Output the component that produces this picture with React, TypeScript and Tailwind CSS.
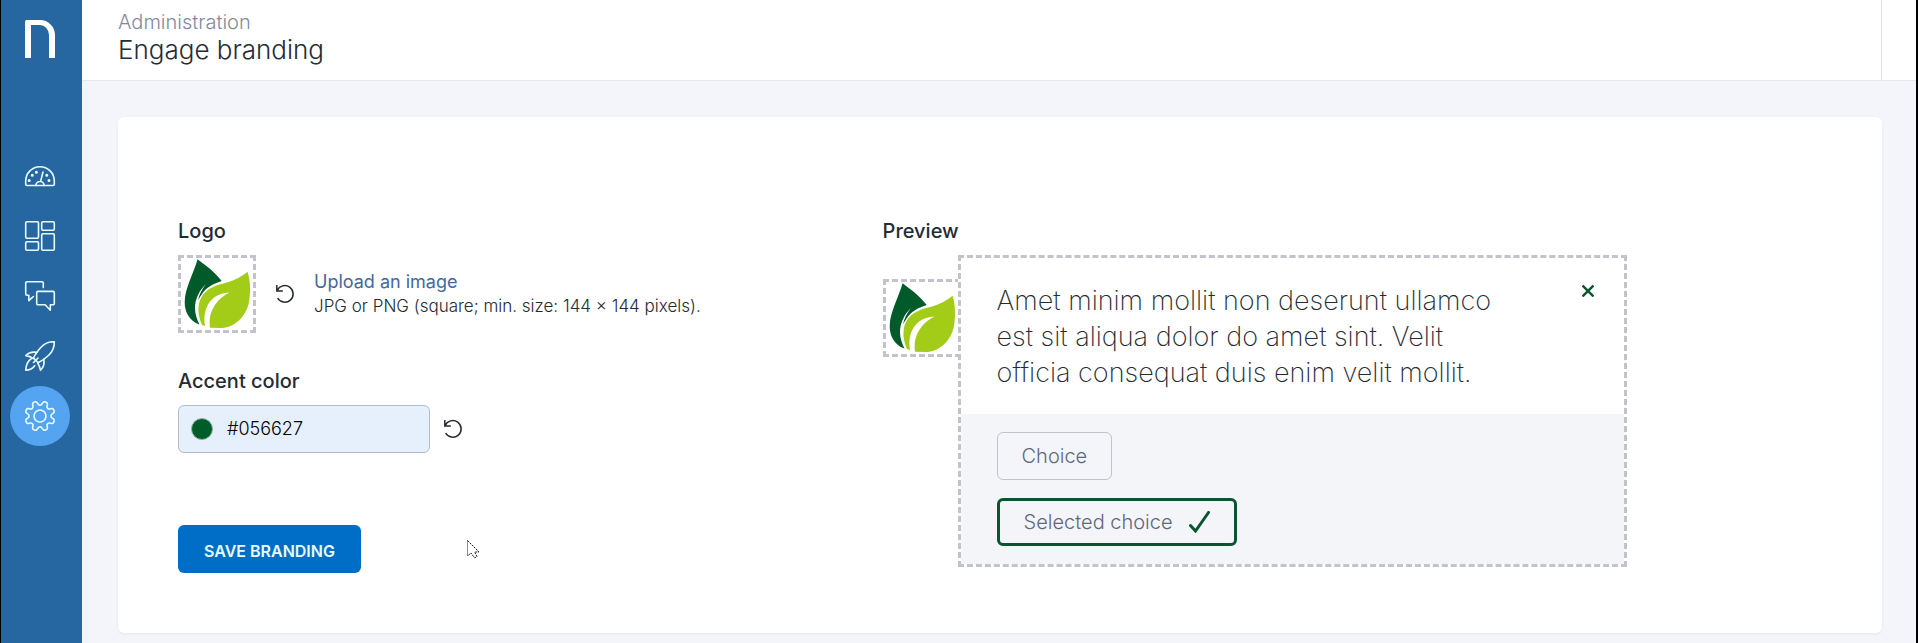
import { useState } from 'react';
import type { ReactNode } from 'react';

const DEFAULT_COLOR = '#056627';

function GaugeIcon() {
  return (
    <>
      <path d="M2 24.5a1.3 1.3 0 0 1-1.3-1.3V20a14.3 14.3 0 0 1 28.6 0v3.2a1.3 1.3 0 0 1-1.3 1.3Z" />
      <path d="M11 24.5a4 4 0 0 1 8 0M15.6 20.4 18 11" />
      {[[4.2, 19.4], [7.3, 14.3], [11.4, 11.2], [21.8, 14.3], [24, 19.4]].map(([cx, cy]) => (
        <circle key={cx} cx={cx} cy={cy} r="0.7" fill="currentColor" />
      ))}
    </>
  );
}

function BoardIcon() {
  return (
    <>
      <rect x="0.7" y="0.7" width="12.8" height="16.6" rx="1.2" />
      <rect x="16.7" y="0.7" width="12.6" height="8.6" rx="1.2" />
      <rect x="0.7" y="20.7" width="12.8" height="8.6" rx="1.2" />
      <rect x="16.7" y="12.7" width="12.6" height="16.6" rx="1.2" />
    </>
  );
}

function ChatIcon() {
  return (
    <>
      <path d="M18.3 6.6V2A1.3 1.3 0 0 0 17 .7H2A1.3 1.3 0 0 0 .7 2v11A1.3 1.3 0 0 0 2 14.3h1.8v5.4l4.6-4.2" />
      <path d="M13 10.4h15a1.3 1.3 0 0 1 1.3 1.3v10.7a1.3 1.3 0 0 1-1.3 1.3h-2.7v5.6l-5.2-5.6H13a1.3 1.3 0 0 1-1.3-1.3V11.7a1.3 1.3 0 0 1 1.3-1.3Z" />
    </>
  );
}

function RocketIcon() {
  return (
    <>
      <path d="M29.3.7c-5.5-.2-9.8 1.6-13.3 5.5C12.5 10.1 10 13.5 8.5 17l4.7 4.7c3.4-1.5 6.9-3.9 10.5-7.4C27.5 10.6 29.500 6.500 29.300.7Z" />
      <path d="M11.8 11.4C7.500 10.600 3.500 11.800.9 14.600c2.600.3 5 1.200 7.600 3M18.700 18.400c.9 4.300-.3 8.100-3.100 10.900-.6-2.600-1.300-5-3-7.300" />
      <path d="M6.600 17.500C2.600 20 1 24.600.7 29.300c3.700-.3 6.800-1.600 9-4.600M8.500 21.500l4.500-4.500" />
    </>
  );
}

// eight teeth, with a notch at the top
const gearPath = (() => {
  const pt = (r: number, deg: number) => {
    const a = ((deg - 90) * Math.PI) / 180;
    return `${(15 + r * Math.cos(a)).toFixed(2)} ${(15 + r * Math.sin(a)).toFixed(2)}`;
  };
  let d = `M${pt(12.4, -10)}`;
  for (let i = 0; i < 8; i++) {
    const a = i * 45;
    d += `A2.4 2.4 0 0 0 ${pt(12.4, a + 10)}L${pt(14, a + 13)}Q${pt(15, a + 15)} ${pt(15, a + 19)}`;
    d += `L${pt(15, a + 26)}Q${pt(15, a + 30)} ${pt(14, a + 32)}L${pt(12.4, a + 35)}`;
  }
  return d + 'Z';
})();

function GearIcon() {
  return (
    <>
      <path d={gearPath} />
      <circle cx="15" cy="15" r="6" />
    </>
  );
}

const navItems: { label: string; icon: ReactNode; active?: boolean }[] = [
  { label: 'Dashboard', icon: <GaugeIcon /> },
  { label: 'Boards', icon: <BoardIcon /> },
  { label: 'Conversations', icon: <ChatIcon /> },
  { label: 'Engage', icon: <RocketIcon /> },
  { label: 'Administration', icon: <GearIcon />, active: true },
];

function Sidebar() {
  return (
    <aside className="w-[82px] shrink-0 border-l border-black bg-[#2767a1] pt-5 pl-[9px]">
      <a href="#home" aria-label="Home" className="flex w-[60px] justify-center">
        <span className="h-[38px] w-[30px] rounded-tl-xs rounded-tr-[15px] border-x-6 border-t-5 border-white" />
      </a>
      <nav className="mt-[88px] flex flex-col">
        {navItems.map((item) => (
          <a
            key={item.label}
            href={`#${item.label.toLowerCase()}`}
            aria-label={item.label}
            className={`flex size-[60px] items-center justify-center rounded-full text-[#e8fbff] ${item.active ? 'bg-[#55a4f2]' : ''}`}
          >
            <svg
              viewBox="0 0 30 30"
              className="size-[30px] overflow-visible"
              fill="none"
              stroke="currentColor"
              strokeWidth="1.6"
              strokeLinecap="round"
              strokeLinejoin="round"
            >
              {item.icon}
            </svg>
          </a>
        ))}
      </nav>
    </aside>
  );
}

function LeafLogo() {
  return (
    <svg viewBox="0 0 72 72" className="size-[72px]">
      <path fill="#005a2a" d="M16.600 1.300C24 7 33 13 40.700 23 31 26 25 30 21 36l-4 6c1.500-6 4-11 8-16-6.500 6-11 15-11 24 0 6 2 12 4.500 16.500C8 63 3.500 53 3.700 44 4 30 12 17 16.600 1.300Z" />
      <path fill="#a2cc18" d="M21 67c-4-9-5-19-1-27 5-10 16-13 26-15.500 8-2.500 15-6 20.600-10.800C69 22 70 32 68 44 65 60 52 70 40 70l-11-.2C28 62 29 54 34 47c4-6 9-10 14.500-12.500C36 35 28 42 25 51c-2 6-2 11-1 17Z" />
    </svg>
  );
}

function ResetButton({ label, onClick }: { label: string; onClick?: () => void }) {
  return (
    <button type="button" aria-label={label} onClick={onClick} className="text-[#252b33]">
      <svg viewBox="0 0 18 18" className="size-[18px] overflow-visible" fill="none" stroke="currentColor" strokeWidth="1.5">
        <path d="M.8 0v6h6M1.200 5.600A8.300 8.300 0 1 1 1.600 13" />
      </svg>
    </button>
  );
}

function BrandingForm() {
  const [color, setColor] = useState(DEFAULT_COLOR);

  return (
    <form onSubmit={(e) => e.preventDefault()}>
      <h2 className="text-xl leading-6 font-medium">Logo</h2>
      <div className="mt-3 flex items-center">
        <div className="size-[78px] border-3 border-dashed border-[#c3c4cb]">
          <LeafLogo />
        </div>
        <div className="ml-5 flex">
          <ResetButton label="Reset logo" />
        </div>
        <div className="ml-5">
          <a href="#upload" className="block text-lg leading-6 text-[#43699a]">Upload an image</a>
          <p className="text-[17px] leading-6 font-light">JPG or PNG (square; min. size: 144 × 144 pixels).</p>
        </div>
      </div>

      <label htmlFor="accent" className="mt-9 block text-xl leading-6 font-medium">Accent color</label>
      <div className="mt-3 flex items-center">
        <div className="flex h-12 w-[252px] items-center rounded-md border border-[#b3bccd] bg-[#e6effc] pl-3">
          <span className="size-[22px] shrink-0 rounded-full border border-[#8fb39d]" style={{ backgroundColor: color === DEFAULT_COLOR ? '#005c28' : color }} />
          <input
            id="accent"
            value={color}
            onChange={(e) => setColor(e.target.value)}
            className="ml-[14px] w-full min-w-0 bg-transparent text-lg font-light text-black outline-none"
          />
        </div>
        <div className="ml-[14px] flex">
          <ResetButton label="Reset accent color" onClick={() => setColor(DEFAULT_COLOR)} />
        </div>
      </div>

      <button type="submit" className="mt-18 h-12 rounded-md bg-[#006ec6] px-[26px] pt-[3px] text-base font-semibold text-[#e9fbff]">
        SAVE BRANDING
      </button>
    </form>
  );
}

function Preview() {
  return (
    <section>
      <h2 className="text-xl leading-6 font-medium">Preview</h2>
      <div className="mt-3 flex items-start">
        <div className="mt-6 -mr-[3px] size-[78px] shrink-0 border-3 border-dashed border-[#c3c4cb]">
          <LeafLogo />
        </div>
        <div className="relative w-full max-w-[669px] border-3 border-dashed border-[#c3c4cb] bg-white">
          <div className="flex items-start justify-between px-9 pt-[25px] pb-[23px]">
            <p className="max-w-[520px] text-[27px] leading-9 font-extralight text-[#252b33]">
              Amet minim mollit non deserunt ullamco est sit aliqua dolor do amet sint. Velit officia consequat duis enim velit mollit.
            </p>
            <button type="button" aria-label="Close" className="mt-[2px] -mr-[6px] text-[#0a5430]">
              <svg viewBox="0 0 12 12" className="size-3" fill="none" stroke="currentColor" strokeWidth="2.4">
                <path d="M.5.5l11 11M11.500.5L.5 11.500" />
              </svg>
            </button>
          </div>
          <div className="flex flex-col items-start gap-[18px] bg-[#f4f5f9] px-9 py-[18px] text-xl font-light text-[#62677d]">
            <button type="button" className="h-12 rounded-md border border-[#c3c4cb] px-6">Choice</button>
            <button type="button" className="flex h-12 items-center gap-4 rounded-md border-3 border-[#0a5430] px-6">
              Selected choice
              <svg viewBox="0 0 21 22" className="h-[22px] w-[21px]" fill="none" stroke="#0a5430" strokeWidth="3" strokeLinecap="round">
                <path d="M1.500 14.500 6.500 20 19.500 1.500" />
              </svg>
            </button>
          </div>
        </div>
      </div>
    </section>
  );
}

export default function App() {
  return (
    <div className="flex min-h-screen border-r-2 border-black bg-[#f4f5fa] font-['Inter',sans-serif] text-[#252b33]">
      <Sidebar />
      <div className="flex min-w-0 flex-1 flex-col">
        <header className="flex h-[81px] border-b border-[#e3e6ea] bg-white">
          <div className="flex-1 pt-2 pl-9">
            <p className="text-xl leading-7 font-light text-[#858a9b]">Administration</p>
            <h1 className="text-[26px] leading-7 font-light">Engage branding</h1>
          </div>
          <div className="w-[35px] border-l border-[#dfe1e5]" />
        </header>
        <main className="pt-9 pr-[34px] pb-[10px] pl-9">
          <div className="grid grid-cols-[3fr_4fr] rounded-md bg-white px-[60px] pt-[102px] pb-[60px] shadow-sm shadow-slate-200">
            <BrandingForm />
            <Preview />
          </div>
        </main>
      </div>
      {/* mouse pointer */}
      <svg viewBox="0 0 13 19" className="pointer-events-none absolute top-[540px] left-[467px] h-[19px] w-[13px]" fill="#fff" stroke="#15181c" strokeWidth="1">
        <path d="M.5.5v15.500" />
        <path d="M.5.5 12 12H7.700l2.300 4.800-2.500 1L4 13l-3.500 3" strokeDasharray="2 1" />
      </svg>
    </div>
  );
}
